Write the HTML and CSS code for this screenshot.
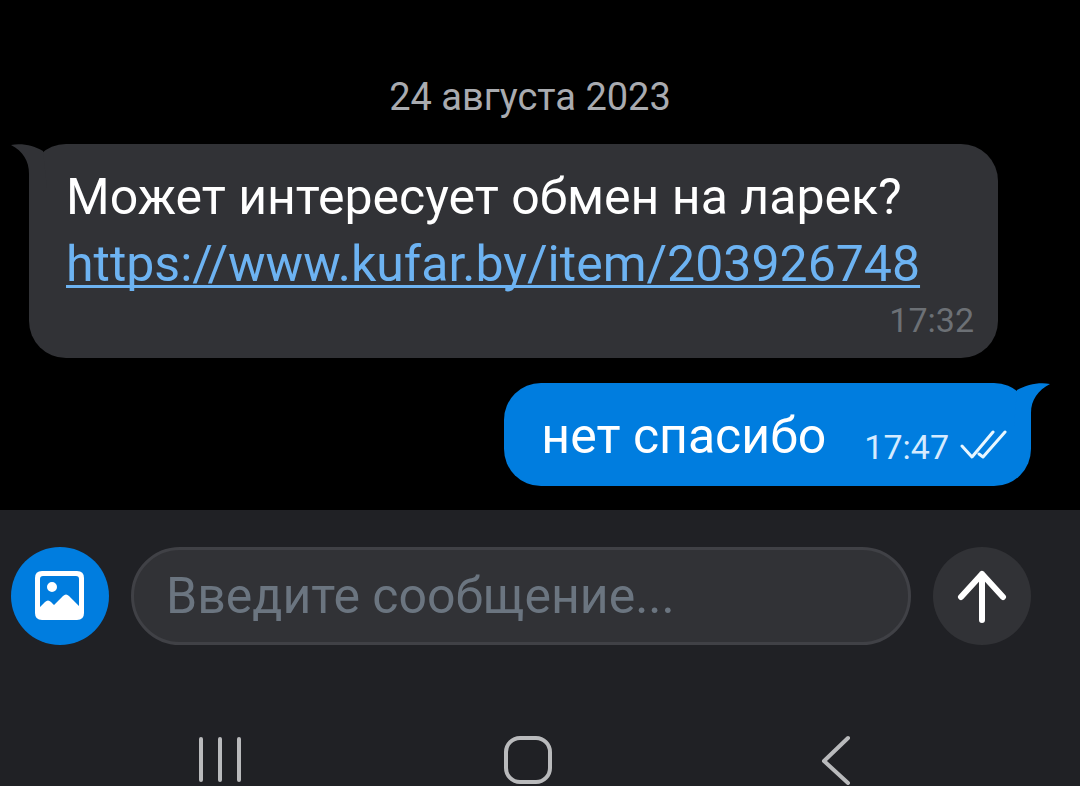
FILE: index.html
```html
<!DOCTYPE html>
<html lang="ru">
<head>
  <meta charset="UTF-8">
  <meta name="viewport" content="width=device-width, initial-scale=1.0">
  <title>Сообщения</title>
  <link rel="stylesheet" href="styles.css">
</head>
<body>
  <main class="chat">
    <div class="date">24 августа 2023</div>

    <div class="message incoming">
      <svg class="tail" width="60" height="44" viewBox="0 0 60 44">
        <path d="M0 1C12-1 23 2 32 7L36 44H18V30C18 17 12 7 0 1Z" />
      </svg>
      <p>Может интересует обмен на ларек?<br><a href="https://www.kufar.by/item/203926748">https://www.kufar.by/item/203926748</a></p>
      <time>17:32</time>
    </div>

    <div class="message outgoing">
      <svg class="tail" width="60" height="44" viewBox="0 0 60 44">
        <path d="M60 1C48-1 37 2 27 7L24 44H41V30C41 17 48 7 60 1Z" />
      </svg>
      <p>нет спасибо</p>
      <time>17:47</time>
      <svg class="checks" width="48" height="32" viewBox="0 0 48 32">
        <path d="M3 17L13 28L34 3M20 25L24 28L46 3" />
      </svg>
    </div>
  </main>

  <footer class="panel">
    <form class="composer">
      <button class="round attach" type="button" aria-label="Прикрепить фото">
        <svg width="50" height="50" viewBox="0 0 50 50">
          <path fill-rule="evenodd" d="M7 0H42Q49 0 49 7V42Q49 49 42 49H7Q0 49 0 42V7Q0 0 7 0ZM8 5Q5 5 5 8V36L10 31Q13 28 16 31L19 34L28 25Q31 22 34 25L44 35V8Q44 5 41 5ZM17 11A5 5 0 1 0 17 21A5 5 0 1 0 17 11Z" />
        </svg>
      </button>
      <input type="text" placeholder="Введите сообщение..." aria-label="Сообщение">
      <button class="round send" type="button" aria-label="Отправить">
        <svg width="50" height="54" viewBox="0 0 50 54">
          <path d="M25 51V5M4 28L25 5L46 28" />
        </svg>
      </button>
    </form>

    <nav class="system-nav">
      <button type="button" aria-label="Недавние">
        <svg width="50" height="50" viewBox="0 0 50 50"><path d="M6 4V45M25 4V45M44 4V45" /></svg>
      </button>
      <button type="button" aria-label="Домой">
        <svg width="50" height="50" viewBox="0 0 50 50"><rect x="3" y="3" width="44" height="44" rx="14" /></svg>
      </button>
      <button type="button" aria-label="Назад">
        <svg width="50" height="50" viewBox="0 0 50 50"><path d="M37 3L13 26L37 48" /></svg>
      </button>
    </nav>
  </footer>
</body>
</html>
```

FILE: styles.css
```css
* { box-sizing: border-box; }
body {
  margin: 0;
  min-height: 100vh;
  display: flex;
  flex-direction: column;
  background: #000;
  color: #fff;
  font-family: Roboto, sans-serif;
}
button {
  padding: 0;
  border: none;
  background: none;
  cursor: pointer;
}
svg { display: block; }

/* messages */
.chat {
  display: flex;
  flex-direction: column;
  padding: 75px 49px 24px 29px;
}
.date {
  margin-bottom: 25px;
  text-align: center;
  font-size: 38px;
  line-height: 44px;
  color: #a9abb0;
}
.message {
  position: relative;
  padding: 20px 24px 16px 37px;
  border-radius: 37px;
  font-size: 50px;
  line-height: 67px;
}
.message p { margin: 0; }
.message time {
  font-size: 34px;
  line-height: 44px;
}
.message a {
  color: #6db3f2;
  text-decoration-thickness: 3px;
  text-underline-offset: 4px;
  text-decoration-skip-ink: none;
}
.tail {
  position: absolute;
  top: 0;
}
.incoming {
  display: flex;
  flex-direction: column;
  margin-right: 33px;
  background: #313236;
}
.incoming .tail {
  left: -18px;
  fill: #313236;
}
.incoming time {
  align-self: flex-end;
  color: #6c7075;
}
.outgoing {
  display: flex;
  align-items: center;
  align-self: flex-end;
  margin-top: 25px;
  background: #007ddf;
}
.outgoing .tail {
  right: -19px;
  fill: #007ddf;
}
.outgoing time {
  margin: 20px 10px 0 38px;
  color: #d5ebff;
}
.checks {
  margin-top: 16px;
  fill: none;
  stroke: #e8f7ff;
  stroke-width: 3;
  stroke-linecap: round;
  stroke-linejoin: round;
}

/* bottom panel */
.panel {
  flex: 1;
  padding: 37px 49px 0 11px;
  background: #202125;
}
.composer {
  display: flex;
  gap: 22px;
}
.composer input {
  flex: 1;
  min-width: 0;
  height: 98px;
  padding: 0 32px;
  border: 3px solid #404146;
  border-radius: 49px;
  background: #313236;
  color: #fff;
  font-family: inherit;
  font-size: 50px;
}
.composer input::placeholder {
  color: #6b7580;
  opacity: 1;
}
.round {
  display: flex;
  flex: none;
  align-items: center;
  justify-content: center;
  width: 98px;
  height: 98px;
  border-radius: 50%;
}
.attach {
  background: #007ddf;
  fill: #fff;
}
.send {
  background: #313236;
  fill: none;
  stroke: #fff;
  stroke-width: 6;
  stroke-linecap: round;
  stroke-linejoin: round;
}
.system-nav {
  display: flex;
  justify-content: space-between;
  margin-top: 90px;
  padding: 0 170px 0 184px;
  fill: none;
  stroke: #b9babc;
  stroke-width: 4;
  stroke-linecap: round;
  stroke-linejoin: round;
}
```
